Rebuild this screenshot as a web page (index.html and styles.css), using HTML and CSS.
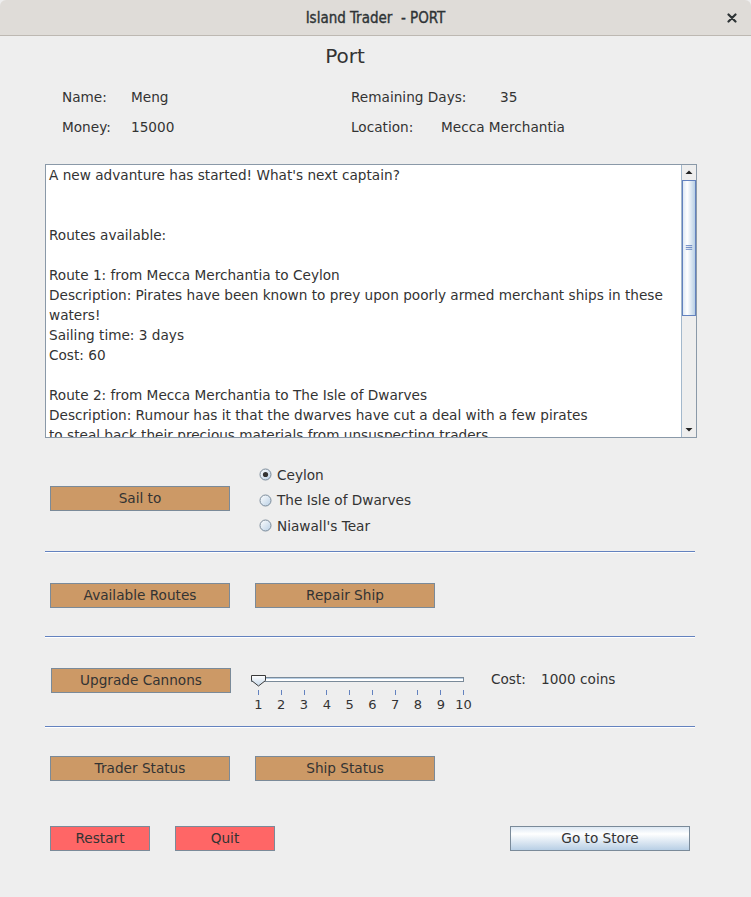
FILE: index.html
```html
<!DOCTYPE html>
<html>
<head>
<meta charset="utf-8">
<title>Island Trader - PORT</title>
<link rel="stylesheet" href="styles.css">
</head>
<body>
<div class="window">
  <header class="titlebar">
    <span></span>
    <span class="title">Island Trader  - PORT</span>
    <span class="close">
      <svg width="10" height="10" viewBox="0 0 10 10"><path d="M1.5 1.5 L8.5 8.5 M8.5 1.5 L1.5 8.5" stroke="#2e3436" stroke-width="2.2" fill="none" stroke-linecap="round"/></svg>
    </span>
  </header>

  <main class="content">
    <h1 class="heading">Port</h1>

    <div class="info">
      <div class="info-row">
        <div class="pair pair-left"><span class="lbl w69">Name:</span><span>Meng</span></div>
        <div class="pair"><span class="lbl w149">Remaining Days:</span><span>35</span></div>
      </div>
      <div class="info-row">
        <div class="pair pair-left"><span class="lbl w69">Money:</span><span>15000</span></div>
        <div class="pair"><span class="lbl w90">Location:</span><span>Mecca Merchantia</span></div>
      </div>
    </div>

    <div class="textarea">
<pre class="log">A new advanture has started! What's next captain?


Routes available:

Route 1: from Mecca Merchantia to Ceylon
Description: Pirates have been known to prey upon poorly armed merchant ships in these
waters!
Sailing time: 3 days
Cost: 60

Route 2: from Mecca Merchantia to The Isle of Dwarves
Description: Rumour has it that the dwarves have cut a deal with a few pirates
to steal back their precious materials from unsuspecting traders.</pre>
      <div class="vscroll">
        <div class="arrow">
          <svg width="14" height="15" viewBox="0 0 14 15"><path d="M3.5 9 L10.5 9 L7 5.5 Z" fill="#222"/></svg>
        </div>
        <div class="thumb">
          <svg width="13" height="6" viewBox="0 0 13 6"><path d="M3 1.5 H10 M3 3.5 H10 M3 5.5 H10" stroke="#6382bf" stroke-width="1"/></svg>
        </div>
        <div class="track"></div>
        <div class="arrow">
          <svg width="14" height="15" viewBox="0 0 14 15"><path d="M3.5 6 L10.5 6 L7 9.5 Z" fill="#222"/></svg>
        </div>
      </div>
    </div>

    <section class="sail">
      <button class="btn tan">Sail to</button>
      <div class="radios">
        <label class="radio">
          <svg width="13" height="13" viewBox="0 0 13 13"><defs><linearGradient id="rg1" x1="0" y1="0" x2="1" y2="1"><stop offset="0" stop-color="#ffffff"/><stop offset="1" stop-color="#b8cfe5"/></linearGradient></defs><circle cx="6.5" cy="6.5" r="5.5" fill="url(#rg1)" stroke="#7a8a99"/><circle cx="6.5" cy="6.5" r="2.6" fill="#333"/></svg>
          <span>Ceylon</span>
        </label>
        <label class="radio">
          <svg width="13" height="13" viewBox="0 0 13 13"><defs><linearGradient id="rg2" x1="0" y1="0" x2="1" y2="1"><stop offset="0" stop-color="#ffffff"/><stop offset="1" stop-color="#b8cfe5"/></linearGradient></defs><circle cx="6.5" cy="6.5" r="5.5" fill="url(#rg2)" stroke="#7a8a99"/></svg>
          <span>The Isle of Dwarves</span>
        </label>
        <label class="radio">
          <svg width="13" height="13" viewBox="0 0 13 13"><defs><linearGradient id="rg3" x1="0" y1="0" x2="1" y2="1"><stop offset="0" stop-color="#ffffff"/><stop offset="1" stop-color="#b8cfe5"/></linearGradient></defs><circle cx="6.5" cy="6.5" r="5.5" fill="url(#rg3)" stroke="#7a8a99"/></svg>
          <span>Niawall's Tear</span>
        </label>
      </div>
    </section>

    <div class="sep sep1"></div>

    <section class="btn-row row-routes">
      <button class="btn tan">Available Routes</button>
      <button class="btn tan">Repair Ship</button>
    </section>

    <div class="sep sep2"></div>

    <section class="upgrade">
      <button class="btn tan">Upgrade Cannons</button>
      <div class="slider">
        <div class="slider-track-area">
          <div class="slider-track"></div>
          <svg class="slider-thumb" width="16" height="12" viewBox="0 0 16 12"><defs><linearGradient id="tg" x1="0" y1="0" x2="0" y2="1"><stop offset="0" stop-color="#ffffff"/><stop offset="1" stop-color="#c6d8ea"/></linearGradient></defs><path d="M0.5 0.5 H14.5 V5.5 L7.5 11 L0.5 5.5 Z" fill="url(#tg)" stroke="#3a3a3a" stroke-width="1"/></svg>
        </div>
        <div class="ticks">
          <i></i><i></i><i></i><i></i><i></i><i></i><i></i><i></i><i></i><i></i>
        </div>
        <div class="tick-labels">
          <span>1</span><span>2</span><span>3</span><span>4</span><span>5</span><span>6</span><span>7</span><span>8</span><span>9</span><span>10</span>
        </div>
      </div>
      <div class="cost"><span class="cost-lbl">Cost:</span><span>1000 coins</span></div>
    </section>

    <div class="sep sep3"></div>

    <section class="btn-row row-status">
      <button class="btn tan">Trader Status</button>
      <button class="btn tan">Ship Status</button>
    </section>

    <section class="bottom-row">
      <button class="btn red small">Restart</button>
      <button class="btn red small">Quit</button>
      <button class="btn store">Go to Store</button>
    </section>
  </main>
</div>
</body>
</html>
```

FILE: styles.css
```css
* { box-sizing: border-box; }

html, body {
  margin: 0;
  padding: 0;
  background: #eeeeee;
}

body {
  font-family: "DejaVu Sans", "Liberation Sans", sans-serif;
  font-size: 13.65px;
  color: #333333;
  width: 751px;
  height: 897px;
  overflow: hidden;
}

.window {
  width: 751px;
  height: 897px;
  background: #eeeeee;
}

/* Title bar */
.titlebar {
  height: 36px;
  background: #dfdcd8;
  border-bottom: 1px solid #bdb8b2;
  border-radius: 6px 6px 0 0;
  display: grid;
  grid-template-columns: 1fr auto 1fr;
  align-items: center;
}

.title {
  font-family: "DejaVu Sans Condensed", "DejaVu Sans", sans-serif;
  font-stretch: condensed;
  font-size: 15px;
  color: #2e3436;
  white-space: pre;
  line-height: 20px;
  -webkit-text-stroke: 0.35px #2e3436;
}

.close {
  justify-self: end;
  padding-right: 14px;
  display: flex;
  align-items: center;
}

/* Content */
.content {
  padding-top: 8px;
}

.heading {
  margin: 0;
  width: 690px;
  text-align: center;
  font-size: 20px;
  font-weight: normal;
  line-height: 24px;
  color: #333;
}

.info {
  margin-top: 19px;
  padding-left: 62px;
  display: flex;
  flex-direction: column;
  gap: 10px;
}

.info-row {
  display: flex;
  height: 20px;
  line-height: 20px;
}

.pair { display: flex; }
.pair-left { width: 289px; }
.lbl { display: inline-block; }
.w69 { width: 69px; }
.w90 { width: 90px; }
.w149 { width: 149px; }

/* Text area */
.textarea {
  margin: 27px 0 0 45px;
  width: 652px;
  height: 274px;
  border: 1px solid #8a99a8;
  background: #ffffff;
  display: flex;
}

.log {
  flex: 1;
  margin: 0;
  padding: 0 0 0 3px;
  font-family: "DejaVu Sans", sans-serif;
  font-size: 13.65px;
  line-height: 20px;
  color: #333;
  white-space: pre;
  overflow: hidden;
}

.vscroll {
  width: 15px;
  border-left: 1px solid #a3b8cc;
  background: #eeeeee;
  display: flex;
  flex-direction: column;
}

.arrow {
  height: 15px;
  display: flex;
  align-items: center;
  justify-content: center;
  background: #eeeeee;
}

.thumb {
  height: 136px;
  border: 1px solid #6382bf;
  background: linear-gradient(to right, #dde8f3 0%, #ffffff 35%, #b8cfe5 100%);
  display: flex;
  align-items: center;
  justify-content: center;
  padding-bottom: 2px;
}

.track {
  flex: 1;
  background: #eeeeee;
}

/* Sail section */
.sail {
  margin-top: 24px;
  padding-left: 50px;
  display: flex;
  align-items: flex-start;
}

.btn {
  font-family: "DejaVu Sans", sans-serif;
  font-size: 13.65px;
  color: #333333;
  height: 25px;
  width: 180px;
  border: 1px solid #7a8a99;
  padding: 0;
  margin: 0;
  line-height: 23px;
  text-align: center;
  border-radius: 0;
}

.tan { background: #cc9966; }
.red { background: #ff6666; }
.small { width: 100px; }
.store {
  background: linear-gradient(to bottom, #dde8f3 0%, #ffffff 30%, #b8cfe5 100%);
}

.sail .btn { margin-top: 24px; }

.radios {
  margin-left: 29px;
  display: flex;
  flex-direction: column;
}

.radio {
  height: 25.5px;
  display: flex;
  align-items: center;
  gap: 5px;
}

.radio svg { display: block; }

/* Separators */
.sep {
  margin-left: 45px;
  width: 650px;
  height: 2px;
  border-top: 1px solid #6382bf;
  border-bottom: 1px solid #ffffff;
}

.sep1 { margin-top: 12.5px; }
.sep2 { margin-top: 28px; }
.sep3 { margin-top: 13px; }

/* Button rows */
.btn-row {
  padding-left: 50px;
  display: flex;
  gap: 25px;
}

.row-routes { margin-top: 30px; }
.row-status { margin-top: 28px; }

/* Upgrade row */
.upgrade {
  margin-top: 30px;
  padding-left: 51px;
  display: flex;
  align-items: flex-start;
}

.slider {
  margin-left: 20px;
  margin-top: 5px;
  width: 213px;
  display: flex;
  flex-direction: column;
}

.slider-track-area {
  position: relative;
  height: 17px;
}

.slider-track {
  margin-top: 4px;
  height: 5px;
  border: 1px solid #7a8a99;
  background: #ffffff;
  box-shadow: inset 0 1px 0 #b8cfe5;
}

.slider-thumb {
  position: absolute;
  left: 0;
  top: 2px;
  display: block;
}

.ticks {
  margin-left: 7px;
  width: 206px;
  height: 5px;
  display: flex;
  justify-content: space-between;
}

.ticks i {
  display: block;
  width: 1px;
  height: 5px;
  background: #6382bf;
}

.tick-labels {
  margin-top: 2px;
  margin-left: -4px;
  width: 228px;
  display: grid;
  grid-template-columns: repeat(10, 1fr);
  font-size: 13px;
  line-height: 16px;
  text-align: center;
}

.cost {
  margin-left: 27px;
  margin-top: 1px;
  line-height: 20px;
  display: flex;
}

.cost-lbl { width: 50px; }

/* Bottom row */
.bottom-row {
  margin-top: 45px;
  margin-left: 50px;
  width: 640px;
  display: flex;
  gap: 25px;
}

.bottom-row .store { margin-left: auto; }
```
